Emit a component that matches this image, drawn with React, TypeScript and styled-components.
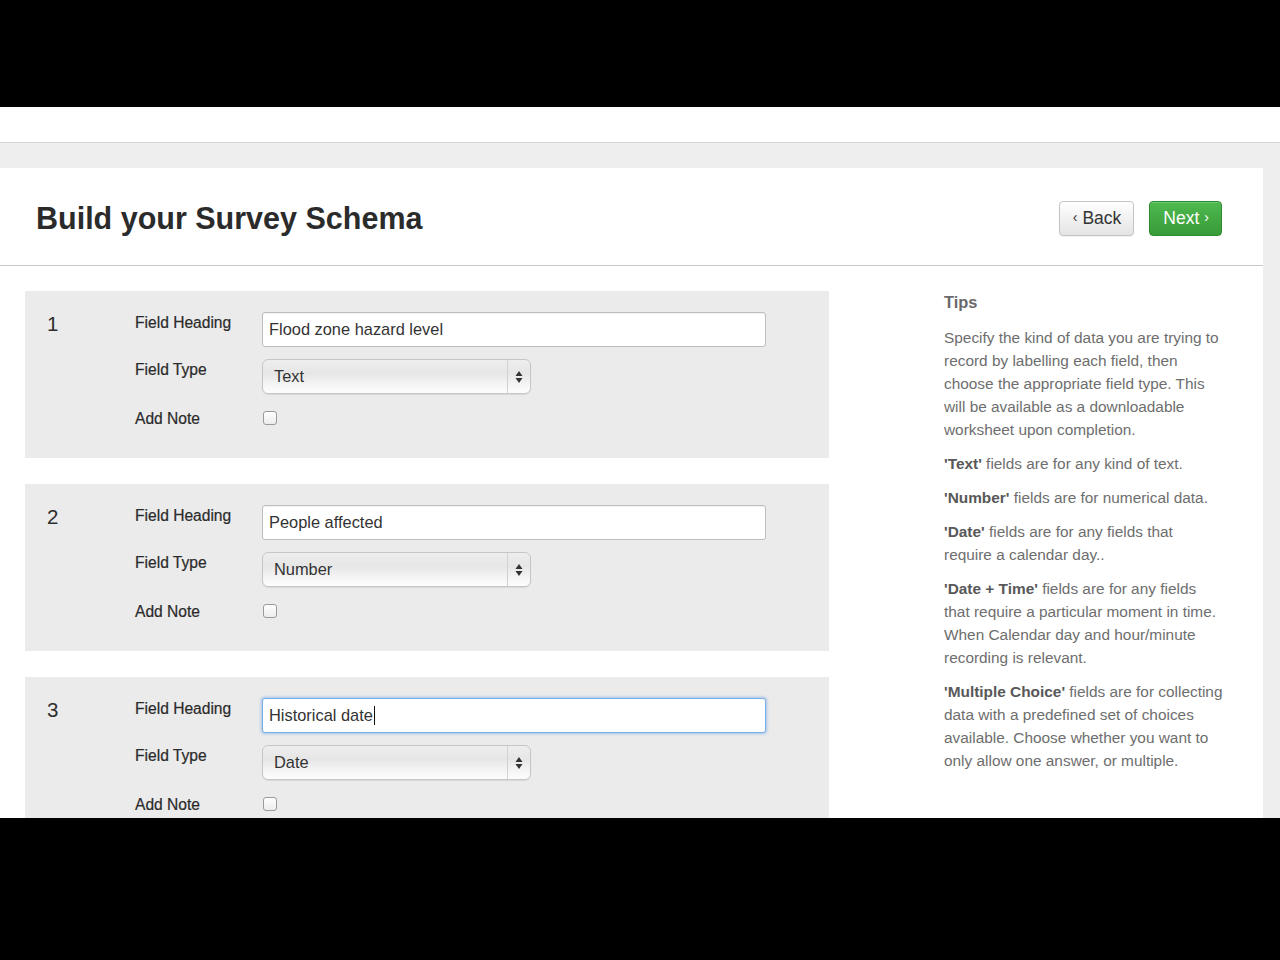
import React from 'react';
import styled, { createGlobalStyle } from 'styled-components';

const GlobalStyle = createGlobalStyle`
  html, body {
    margin: 0;
    padding: 0;
    background: #000;
  }
  body {
    font-family: 'Liberation Sans', Arial, Helvetica, sans-serif;
  }
`;

const Screen = styled.div`
  margin-top: 107px;
  height: 711px;
  overflow: hidden;
  background: #eeeeee;
`;

const TopNav = styled.div`
  height: 35px;
  background: #fff;
  border-bottom: 1px solid #d6d6d6;
`;

const Card = styled.div`
  margin-top: 25px;
  width: 1263px;
  height: 700px;
  background: #fff;
`;

const Header = styled.div`
  box-sizing: border-box;
  height: 98px;
  display: flex;
  align-items: center;
  justify-content: space-between;
  padding: 4px 41px 0 36px;
  border-bottom: 1px solid #c8c8c8;
`;

const Title = styled.h1`
  margin: 0;
  font-size: 30.5px;
  font-weight: bold;
  color: #2b2b2b;
`;

const Actions = styled.div`
  display: flex;
  gap: 15px;
`;

const NavButton = styled.button<{ $primary?: boolean }>`
  height: 35px;
  padding: 0 12px 0 13px;
  display: flex;
  align-items: center;
  gap: 5px;
  font-family: inherit;
  font-size: 17.5px;
  border-radius: 4px;
  cursor: pointer;
  color: ${(p) => (p.$primary ? '#fff' : '#333')};
  border: 1px solid ${(p) => (p.$primary ? '#2e8b2e' : '#c4c4c4')};
  background: ${(p) =>
    p.$primary
      ? 'linear-gradient(#4fb94f, #389b38)'
      : 'linear-gradient(#ffffff, #e4e4e4)'};
  box-shadow: ${(p) =>
    p.$primary ? 'inset 0 1px 0 rgba(255,255,255,0.2)' : '0 1px 1px rgba(0,0,0,0.06)'};
`;

const Chevron = styled.span`
  font-size: 14px;
  line-height: 1;
  position: relative;
  top: -2px;
`;

const Body = styled.div`
  display: flex;
`;

const FieldList = styled.div`
  width: 804px;
  padding: 25px 0 0 25px;
  display: flex;
  flex-direction: column;
  gap: 26px;
`;

const FieldBlock = styled.div`
  background: #ebebeb;
  padding: 21px 0 28px 22px;
  display: grid;
  grid-template-columns: 88px 127px 1fr;
  row-gap: 12px;
`;

const Num = styled.div`
  grid-row: 1;
  grid-column: 1;
  font-size: 20.5px;
  line-height: 24px;
  color: #2e2e2e;
`;

const Label = styled.div<{ $row: number }>`
  grid-column: 2;
  grid-row: ${(p) => p.$row};
  font-size: 15.6px;
  line-height: 21px;
  color: #2a2a2a;
  -webkit-text-stroke: 0.2px #2a2a2a;
  align-self: ${(p) => (p.$row === 3 ? 'center' : 'start')};
`;

const Control = styled.div<{ $row: number }>`
  grid-column: 3;
  grid-row: ${(p) => p.$row};
  display: flex;
  align-items: center;
  min-height: ${(p) => (p.$row === 3 ? '24px' : '35px')};
`;

const TextInput = styled.input`
  box-sizing: border-box;
  width: 504px;
  height: 35px;
  padding: 0 6px;
  border: 1px solid #bdbdbd;
  border-radius: 3px;
  background: #fff;
  font-family: inherit;
  font-size: 16.4px;
  color: #333;
  box-shadow: inset 0 1px 1px rgba(0, 0, 0, 0.06);
  outline: none;
`;

const FocusedInput = styled.div`
  box-sizing: border-box;
  width: 504px;
  height: 35px;
  padding: 0 6px;
  display: flex;
  align-items: center;
  border: 1px solid #7aaee6;
  border-radius: 3px;
  background: #fff;
  font-size: 16.4px;
  color: #333;
  box-shadow: 0 0 3px 1px rgba(100, 160, 230, 0.55);
`;

const Caret = styled.span`
  display: inline-block;
  width: 1px;
  height: 19px;
  background: #111;
  margin-left: 1px;
`;

const SelectBox = styled.div`
  box-sizing: border-box;
  width: 269px;
  height: 35px;
  display: flex;
  border: 1px solid #c6c6c6;
  border-radius: 6px;
  background: linear-gradient(#eeeeee 0%, #e6e6e6 40%, #f5f5f5 75%, #fdfdfd 100%);
  box-shadow: 0 1px 1px rgba(0, 0, 0, 0.08);
  overflow: hidden;
`;

const SelectText = styled.div`
  flex: 1;
  display: flex;
  align-items: center;
  padding-left: 11px;
  font-size: 16.4px;
  color: #333;
`;

const SelectArrows = styled.div`
  width: 22px;
  border-left: 1px solid #d2d2d2;
  display: flex;
  align-items: center;
  justify-content: center;
`;

const Checkbox = styled.span`
  box-sizing: border-box;
  display: inline-block;
  width: 14px;
  height: 14px;
  margin-left: 1px;
  border: 1px solid #9a9a9a;
  border-radius: 3px;
  background: linear-gradient(#fff, #ececec);
`;

const Tips = styled.div`
  width: 279px;
  margin-left: 115px;
  padding-top: 26px;
  color: #6e6e6e;
  font-size: 15.4px;
`;

const TipsTitle = styled.div`
  font-size: 16.4px;
  line-height: 21px;
  font-weight: bold;
  color: #6a6a6a;
  margin-bottom: 13px;
`;

const Tip = styled.p`
  margin: 0 0 11px;
  line-height: 23px;

  b {
    color: #585858;
  }
`;

const ArrowIcon = () => (
  <svg width="8" height="14" viewBox="0 0 8 14">
    <path d="M4 1 L7.5 6 L0.5 6 Z" fill="#333" />
    <path d="M4 13 L7.5 8 L0.5 8 Z" fill="#333" />
  </svg>
);

interface IField {
  num: number;
  heading: string;
  type: string;
  focused?: boolean;
}

const fields: IField[] = [
  { num: 1, heading: 'Flood zone hazard level', type: 'Text' },
  { num: 2, heading: 'People affected', type: 'Number' },
  { num: 3, heading: 'Historical date', type: 'Date', focused: true },
];

const Field = ({ num, heading, type, focused }: IField) => (
  <FieldBlock>
    <Num>{num}</Num>
    <Label $row={1}>Field Heading</Label>
    <Control $row={1}>
      {focused ? (
        <FocusedInput>
          {heading}
          <Caret />
        </FocusedInput>
      ) : (
        <TextInput defaultValue={heading} />
      )}
    </Control>
    <Label $row={2}>Field Type</Label>
    <Control $row={2}>
      <SelectBox>
        <SelectText>{type}</SelectText>
        <SelectArrows>
          <ArrowIcon />
        </SelectArrows>
      </SelectBox>
    </Control>
    <Label $row={3}>Add Note</Label>
    <Control $row={3}>
      <Checkbox />
    </Control>
  </FieldBlock>
);

const App = () => {
  return (
    <>
      <GlobalStyle />
      <Screen>
        <TopNav />
        <Card>
          <Header>
            <Title>Build your Survey Schema</Title>
            <Actions>
              <NavButton>
                <Chevron>‹</Chevron>Back
              </NavButton>
              <NavButton $primary>
                Next<Chevron>›</Chevron>
              </NavButton>
            </Actions>
          </Header>
          <Body>
            <FieldList>
              {fields.map((f) => (
                <Field key={f.num} {...f} />
              ))}
            </FieldList>
            <Tips>
              <TipsTitle>Tips</TipsTitle>
              <Tip>
                Specify the kind of data you are trying to record by labelling each
                field, then choose the appropriate field type. This will be available
                as a downloadable worksheet upon completion.
              </Tip>
              <Tip>
                <b>'Text'</b> fields are for any kind of text.
              </Tip>
              <Tip>
                <b>'Number'</b> fields are for numerical data.
              </Tip>
              <Tip>
                <b>'Date'</b> fields are for any fields that require a calendar day..
              </Tip>
              <Tip>
                <b>'Date + Time'</b> fields are for any fields that require a particular
                moment in time. When Calendar day and hour/minute recording is relevant.
              </Tip>
              <Tip>
                <b>'Multiple Choice'</b> fields are for collecting data with a predefined
                set of choices available. Choose whether you want to only allow one
                answer, or multiple.
              </Tip>
            </Tips>
          </Body>
        </Card>
      </Screen>
    </>
  );
};

export default App;
